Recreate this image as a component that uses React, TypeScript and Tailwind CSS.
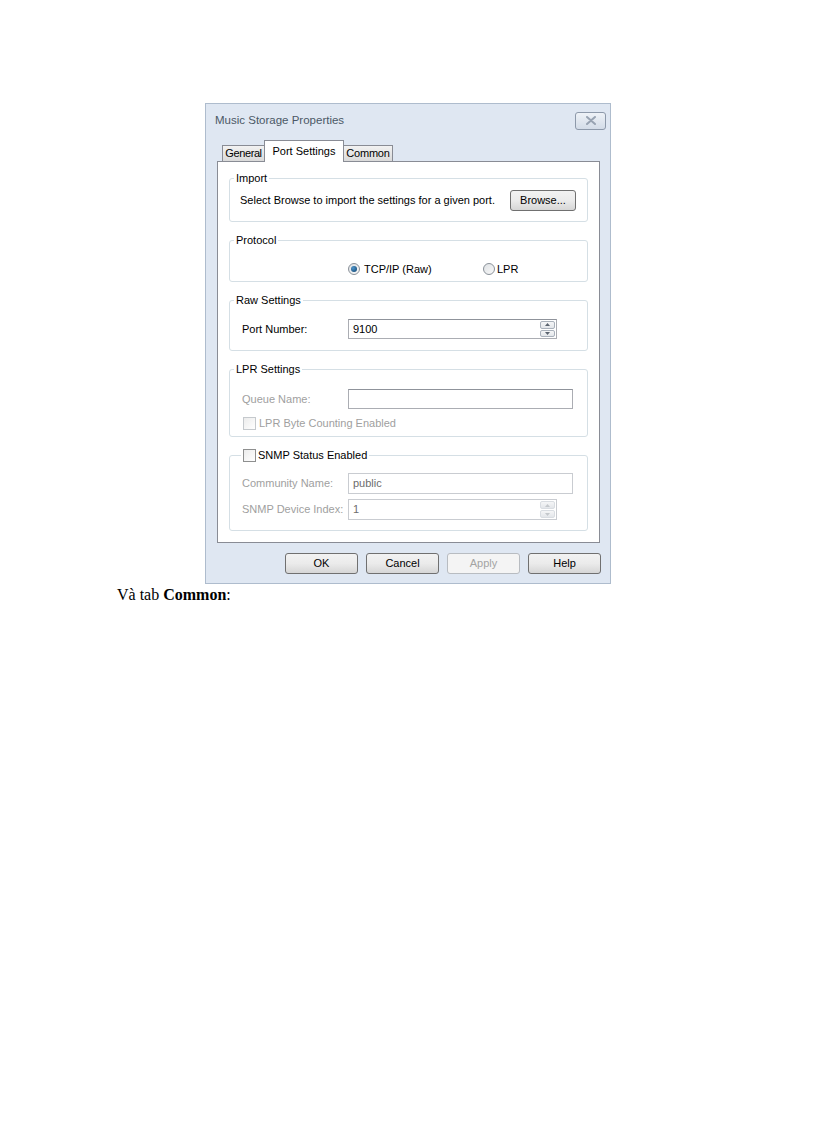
import React from 'react';

const ui = "font-['Liberation_Sans',Arial,sans-serif]";

function Spinner({ disabled = false }: { disabled?: boolean }) {
  const c = disabled ? 'border-[#d9dde2] text-[#c4c8cc]' : 'border-[#a9b1bb] text-[#5b6470]';
  return (
    <div className="flex flex-col gap-px py-px pr-px">
      <div className={`flex h-[8px] w-[15px] items-center justify-center rounded-[2px] border bg-gradient-to-b from-[#f5f6f7] to-[#e3e6ea] ${c}`}>
        <svg width="5" height="3" viewBox="0 0 5 3"><path d="M0 3 L2.5 0 L5 3 Z" fill="currentColor" /></svg>
      </div>
      <div className={`flex h-[8px] w-[15px] items-center justify-center rounded-[2px] border bg-gradient-to-b from-[#f5f6f7] to-[#e3e6ea] ${c}`}>
        <svg width="5" height="3" viewBox="0 0 5 3"><path d="M0 0 L5 0 L2.5 3 Z" fill="currentColor" /></svg>
      </div>
    </div>
  );
}

function TextBox({ value = '', width, height = 20, disabled = false, spin = false }: { value?: string; width: number; height?: number; disabled?: boolean; spin?: boolean }) {
  return (
    <div
      className={`flex items-stretch justify-between border bg-white ${disabled ? 'border-[#c9ccd1] text-[#6d6d6d]' : 'border-[#abadb3] border-t-[#8f939b] text-black'}`}
      style={{ width, height }}
    >
      <span className="flex items-center pl-[4px] text-[11px]">{value}</span>
      {spin && <Spinner disabled={disabled} />}
    </div>
  );
}

function Check({ disabled = false }: { disabled?: boolean }) {
  return (
    <span
      className={`inline-block h-[13px] w-[13px] shrink-0 border bg-gradient-to-br from-[#ececec] to-[#ffffff] ${disabled ? 'border-[#c5c9cd]' : 'border-[#8e8f8f]'}`}
    />
  );
}

function Radio({ checked }: { checked: boolean }) {
  return (
    <span className="flex h-[12px] w-[12px] shrink-0 items-center justify-center rounded-full border border-[#8a9199] bg-gradient-to-br from-[#dfe2e5] to-[#f8f8f8]">
      {checked && <span className="h-[6px] w-[6px] rounded-full bg-[radial-gradient(circle_at_35%_35%,#4f96cc,#0c3f6a)]" />}
    </span>
  );
}

function Btn({ label, disabled = false }: { label: string; disabled?: boolean }) {
  return (
    <button
      className={`h-[21px] w-[73px] rounded-[3px] border text-[11px] ${
        disabled
          ? 'border-[#b8bcc1] bg-[#f4f4f4] text-[#a3a3a3]'
          : 'border-[#707070] bg-gradient-to-b from-[#f2f2f2] via-[#ebebeb] to-[#d6d6d6] text-black'
      }`}
    >
      {label}
    </button>
  );
}

function Group({ legend, height, children }: { legend: React.ReactNode; height: number; children: React.ReactNode }) {
  return (
    <fieldset className="w-full rounded-[3px] border border-[#d5dfe5] p-0" style={{ height }}>
      <legend className="ml-[4px] px-[2px] text-[11px] leading-[14px] text-black">{legend}</legend>
      {children}
    </fieldset>
  );
}

export default function App() {
  return (
    <div className={`min-h-[1123px] w-[816px] bg-white pt-[103px]`}>
      <div className={`ml-[205px] flex h-[481px] w-[406px] flex-col border border-[#aebccd] bg-[#dfe7f2] ${ui}`}>
        {/* title bar */}
        <div className="flex h-[36px] items-center justify-between pl-[9px] pr-[4px]">
          <span className="pb-[2px] text-[11.5px] text-[#4b5866]">Music Storage Properties</span>
          <div className="mb-[3px] flex h-[18px] w-[31px] items-center justify-center rounded-[3px] border border-[#8d99aa] bg-gradient-to-b from-[#eef2f7] to-[#d3dce8]">
            <svg width="10" height="9" viewBox="0 0 10 9">
              <path d="M1 1 L9 8 M9 1 L1 8" stroke="#98a3b2" strokeWidth="2" strokeLinecap="round" fill="none" />
            </svg>
          </div>
        </div>

        <div className="ml-[11px] mr-[10px] flex flex-col">
          {/* tabs */}
          <div className="flex items-end pl-[5px]">
            <div className="flex h-[16px] w-[42px] items-center justify-center border border-b-0 border-r-0 border-[#898c95] bg-gradient-to-b from-[#f2f2f2] to-[#dadada] text-[11px] tracking-[-0.4px] text-black">
              General
            </div>
            <div className="relative z-10 -mb-px flex h-[22px] w-[80px] items-start justify-center border border-b-0 border-[#898c95] bg-white pt-[2px] text-[11px] text-black">
              Port Settings
            </div>
            <div className="flex h-[16px] w-[49px] items-center justify-center border border-b-0 border-l-0 border-[#898c95] bg-gradient-to-b from-[#f2f2f2] to-[#dadada] text-[11px] tracking-[-0.2px] text-black">
              Common
            </div>
          </div>

          {/* panel */}
          <div className="flex h-[382px] flex-col gap-[11px] border border-[#898c95] bg-white px-[11px] pt-[9px]">
            <Group legend="Import" height={51}>
              <div className="flex items-center justify-between pl-[10px] pr-[11px] pt-[5px]">
                <span className="text-[11px] text-black">Select Browse to import the settings for a given port.</span>
                <button className="h-[21px] w-[66px] rounded-[3px] border border-[#707070] bg-gradient-to-b from-[#f2f2f2] via-[#ebebeb] to-[#d6d6d6] text-[11px] text-black">
                  Browse...
                </button>
              </div>
            </Group>

            <Group legend="Protocol" height={49}>
              <div className="flex items-center pl-[118px] pt-[14px] text-[11px] text-black">
                <label className="flex w-[135px] items-center gap-[4px]">
                  <Radio checked />
                  <span>TCP/IP (Raw)</span>
                </label>
                <label className="flex items-center gap-[2px]">
                  <Radio checked={false} />
                  <span>LPR</span>
                </label>
              </div>
            </Group>

            <Group legend="Raw Settings" height={58}>
              <div className="flex items-center pl-[12px] pt-[12px] text-[11px] text-black">
                <span className="w-[106px]">Port Number:</span>
                <TextBox value="9100" width={209} spin />
              </div>
            </Group>

            <Group legend="LPR Settings" height={75}>
              <div className="flex flex-col pl-[12px] pt-[13px] text-[11px] text-[#a0a0a0]">
                <div className="flex items-center">
                  <span className="w-[106px]">Queue Name:</span>
                  <TextBox width={225} />
                </div>
                <label className="mt-[6px] flex items-center gap-[3px] pl-px">
                  <Check disabled />
                  <span>LPR Byte Counting Enabled</span>
                </label>
              </div>
            </Group>

            <fieldset className="w-full rounded-[3px] border border-[#d5dfe5] p-0" style={{ height: 83 }}>
              <legend className="ml-[11px] flex items-center gap-[2px] px-[2px] text-[11px] leading-[14px] text-black">
                <Check />
                <span>SNMP Status Enabled</span>
              </legend>
              <div className="flex flex-col gap-[5px] pl-[12px] pt-[11px] text-[11px] text-[#a0a0a0]">
                <div className="flex items-center">
                  <span className="w-[106px]">Community Name:</span>
                  <TextBox value="public" width={225} height={21} disabled />
                </div>
                <div className="flex items-center">
                  <span className="w-[106px]">SNMP Device Index:</span>
                  <TextBox value="1" width={209} height={21} disabled spin />
                </div>
              </div>
            </fieldset>
          </div>
        </div>

        {/* buttons */}
        <div className="mt-[10px] flex justify-end gap-[8px] pr-[9px]">
          <Btn label="OK" />
          <Btn label="Cancel" />
          <Btn label="Apply" disabled />
          <Btn label="Help" />
        </div>
      </div>

      <p className="ml-[117px] font-['Liberation_Serif','Times_New_Roman',serif] text-[16px] leading-[22px] text-black">
        Và tab <b>Common</b>:
      </p>
    </div>
  );
}
